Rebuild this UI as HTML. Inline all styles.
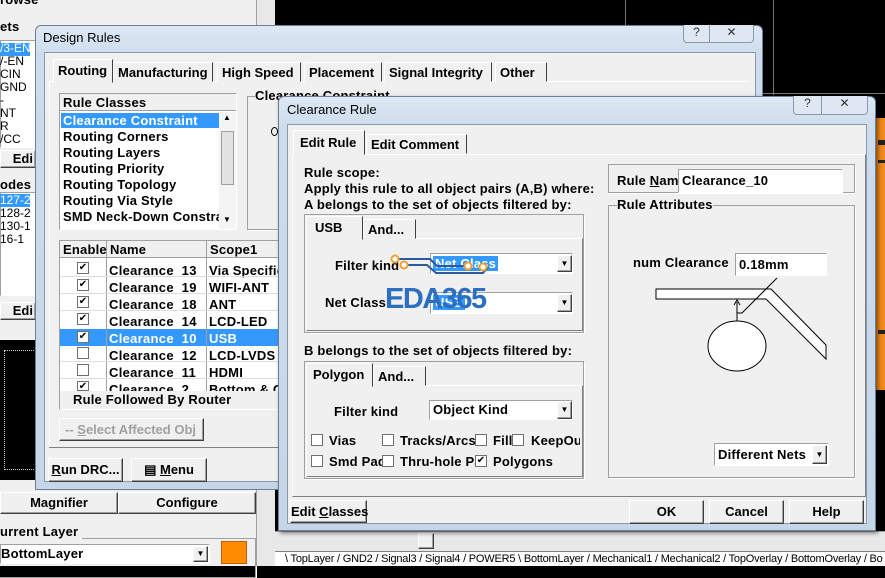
<!DOCTYPE html>
<html><head><meta charset="utf-8"><style>
*{margin:0;padding:0;box-sizing:border-box}
body{width:885px;height:566px;overflow:hidden;position:relative;background:#000;font-family:"Liberation Sans",sans-serif;font-size:13px;color:#000}
.a{position:absolute;white-space:nowrap}
.b{font-weight:bold;letter-spacing:0.2px}
.panel{background:#f0f0f0}
.sunk{border:1px solid;border-color:#a0a0a0 #fff #fff #a0a0a0;background:#fff}
.btn{background:#f0f0f0;border:1px solid;border-color:#fff #404040 #404040 #fff;box-shadow:inset -1px -1px 0 #a0a0a0;text-align:center;font-weight:bold}
.grp{border:1px solid #a0a0a0;box-shadow:1px 1px 0 #fff}
.tab{background:#f0f0f0;border:1px solid;border-color:#fff #404040 transparent #fff;font-weight:bold;padding-left:4px}
.cb{width:12px;height:12px;border:1px solid #707070;background:#fff;font-size:10px;line-height:10px;text-align:center}
.title{background:linear-gradient(#dce7f3,#c9d9ea);border:1px solid #6d7f94;border-radius:6px 6px 0 0}
</style></head><body>

<!-- left panel -->
<div class="a panel" style="left:0;top:0;width:275px;height:566px"></div>
<div class="a b" style="left:0;top:-8px;font-size:13px">rowse</div>
<div class="a b" style="left:0;top:19px">ets</div>
<div class="a sunk" style="left:0;top:40px;width:36px;height:108px"></div>
<div class="a" style="left:0;top:43px;width:30px;height:13px;background:#3399ff"></div>
<div class="a" style="left:0;top:42px;font-size:12px;line-height:13px;color:#000"><span style="color:#fff">/3-EN</span><br>/-EN<br>CIN<br>GND<br>-<br>NT<br>R<br>/CC</div>
<div class="a btn" style="left:0;top:150px;width:36px;height:18px;text-align:right;padding-right:2px">Edi</div>
<div class="a b" style="left:0;top:177px">odes</div>
<div class="a sunk" style="left:0;top:192px;width:36px;height:104px"></div>
<div class="a" style="left:0;top:194px;width:30px;height:13px;background:#3399ff"></div>
<div class="a" style="left:0;top:194px;font-size:12px;line-height:13px"><span style="color:#fff">127-2</span><br>128-2<br>130-1<br>16-1</div>
<div class="a btn" style="left:0;top:302px;width:36px;height:18px;text-align:right;padding-right:2px">Edi</div>
<div class="a" style="left:0;top:340px;width:36px;height:140px;background:#000"></div>
<div class="a" style="left:4px;top:350px;width:32px;height:120px;border:1px dotted #ccc;border-right:none"></div>
<div class="a btn" style="left:0;top:492px;width:118px;height:22px;line-height:20px">Magnifier</div>
<div class="a btn" style="left:118px;top:492px;width:138px;height:22px;line-height:20px">Configure</div>
<div class="a grp" style="left:-2px;top:538px;width:258px;height:40px"></div>
<div class="a b panel" style="left:0;top:524px;padding-right:4px">urrent Layer</div>
<div class="a sunk b" style="left:0;top:544px;width:210px;height:20px;padding-left:0;line-height:18px">BottomLayer</div>
<div class="a btn" style="left:193px;top:546px;width:15px;height:16px;font-size:8px;line-height:14px">▼</div>
<div class="a" style="left:221px;top:541px;width:26px;height:23px;background:#ff8c00;border:1px solid #c06000"></div>
<div class="a" style="left:256px;top:0;width:19px;height:566px;background:#e8e8e8;border-left:1px solid #a0a0a0"></div>

<!-- black area details -->
<div class="a" style="left:625px;top:0;width:1px;height:95px;background:#777"></div>
<div class="a" style="left:773px;top:0;width:1px;height:95px;background:#777"></div>
<div class="a" style="left:763px;top:93px;width:122px;height:1px;background:#777"></div>
<div class="a" style="left:876px;top:118px;width:9px;height:272px;background:#f08a1c"></div>
<div class="a" style="left:878px;top:140px;width:7px;height:5px;background:#222"></div>
<div class="a" style="left:878px;top:160px;width:7px;height:3px;background:#222"></div>
<div class="a" style="left:878px;top:330px;width:7px;height:4px;background:#222"></div>

<!-- bottom scroll + tabs -->
<div class="a" style="left:275px;top:531px;width:610px;height:20px;background:#e8e8e8;border-top:1px solid #a0a0a0"></div>
<div class="a btn" style="left:418px;top:533px;width:16px;height:16px"></div>
<div class="a" style="left:275px;top:551px;width:610px;height:15px;background:#fff;border-top:1px solid #808080;font-size:11px;line-height:14px;color:#000;padding-left:10px;letter-spacing:-0.2px">\ TopLayer / GND2 / Signal3 / Signal4 / POWER5 \ BottomLayer / Mechanical1 / Mechanical2 / TopOverlay / BottomOverlay / Bo</div>

<!-- Design Rules dialog -->
<div class="a title" style="left:35px;top:25px;width:728px;height:465px;background:linear-gradient(#dde8f4 0,#cddcec 30px,#c6d6e8 100%)"></div>
<div class="a" style="left:43px;top:30px;font-size:13px;color:#000">Design Rules</div>
<div class="a" style="left:683px;top:25px;width:27px;height:18px;border:1px solid #8899aa;border-top:none;border-radius:0 0 0 4px;background:#dfe8f2;text-align:center;font-size:12px;color:#333">?</div>
<div class="a" style="left:710px;top:25px;width:44px;height:18px;border:1px solid #8899aa;border-top:none;border-left:none;border-radius:0 0 4px 0;background:#dfe8f2;text-align:center;font-size:12px;color:#333">✕</div>
<div class="a panel" style="left:44px;top:52px;width:712px;height:430px;border:1px solid #8899aa"></div>
<div class="a" style="left:49px;top:81px;width:700px;height:1px;background:#fff"></div>
<div class="a" style="left:49px;top:81px;width:1px;height:366px;background:#fff"></div>
<div class="a" style="left:49px;top:447px;width:236px;height:1px;background:#808080"></div>
<div class="a tab" style="left:53px;top:59px;width:60px;height:24px;line-height:22px;border-bottom-color:#f0f0f0">Routing</div>
<div class="a tab" style="left:113px;top:62px;width:100px;height:20px;line-height:19px">Manufacturing</div>
<div class="a tab" style="left:217px;top:62px;width:84px;height:20px;line-height:19px">High Speed</div>
<div class="a tab" style="left:304px;top:62px;width:78px;height:20px;line-height:19px">Placement</div>
<div class="a tab" style="left:384px;top:62px;width:108px;height:20px;line-height:19px">Signal Integrity</div>
<div class="a tab" style="left:495px;top:62px;width:52px;height:20px;line-height:19px">Other</div>

<div class="a sunk" style="left:59px;top:93px;width:178px;height:137px"></div>
<div class="a b" style="left:60px;top:94px;width:176px;height:17px;background:#f0f0f0;border-bottom:1px solid #a0a0a0;padding-left:3px;line-height:17px">Rule Classes</div>
<div class="a" style="left:61px;top:113px;width:158px;height:15px;background:#3399ff"></div>
<div class="a b" style="left:63px;top:113px;line-height:16px;width:156px;overflow:hidden"><span style="color:#fff">Clearance Constraint</span><br>Routing Corners<br>Routing Layers<br>Routing Priority<br>Routing Topology<br>Routing Via Style<br>SMD Neck-Down Constraint</div>
<div class="a" style="left:219px;top:112px;width:17px;height:117px;background:#f4f4f4"></div>
<div class="a" style="left:221px;top:131px;width:13px;height:54px;background:#e2e2e2;border:1px solid #a0a0a0"></div>
<div class="a" style="left:223px;top:113px;font-size:8px">▲</div>
<div class="a" style="left:223px;top:215px;font-size:8px">▼</div>
<div class="a grp" style="left:247px;top:96px;width:40px;height:134px"></div>
<div class="a b panel" style="left:255px;top:88px">Clearance Constraint</div>
<div class="a" style="left:271px;top:127px;width:7px;height:9px;border:1px solid #000;border-radius:50%"></div>

<div class="a sunk" style="left:59px;top:240px;width:230px;height:170px;background:#fff"></div>
<div class="a" style="left:60px;top:241px;width:228px;height:17px;background:#f0f0f0;border-bottom:1px solid #a0a0a0"></div>
<div class="a b" style="left:63px;top:242px">Enable</div>
<div class="a b" style="left:110px;top:242px">Name</div>
<div class="a b" style="left:210px;top:242px">Scope1</div>
<div class="a" style="left:60px;top:329px;width:228px;height:17px;background:#3399ff"></div>
<div class="a" style="left:106px;top:241px;width:1px;height:150px;background:#a0a0a0"></div>
<div class="a" style="left:206px;top:241px;width:1px;height:150px;background:#a0a0a0"></div>
<div class="a b" style="left:109px;top:262px;line-height:17px;letter-spacing:0.3px">Clearance&nbsp; 13<br>Clearance&nbsp; 19<br>Clearance&nbsp; 18<br>Clearance&nbsp; 14<br><span style="color:#fff">Clearance&nbsp; 10</span><br>Clearance&nbsp; 12<br>Clearance&nbsp; 11<br>Clearance&nbsp; 2</div>
<div class="a b" style="left:209px;top:262px;line-height:17px;width:79px;overflow:hidden">Via Specific<br>WIFI-ANT<br>ANT<br>LCD-LED<br><span style="color:#fff">USB</span><br>LCD-LVDS<br>HDMI<br>Bottom &amp; C</div>
<div class="a" style="left:60px;top:276px;width:228px;height:1px;background:#ddd"></div>
<div class="a" style="left:60px;top:293px;width:228px;height:1px;background:#ddd"></div>
<div class="a" style="left:60px;top:310px;width:228px;height:1px;background:#ddd"></div>
<div class="a" style="left:60px;top:361px;width:228px;height:1px;background:#ddd"></div>
<div class="a" style="left:60px;top:378px;width:228px;height:1px;background:#ddd"></div>
<div class="a cb" style="left:77px;top:262px">✔</div>
<div class="a cb" style="left:77px;top:279px">✔</div>
<div class="a cb" style="left:77px;top:296px">✔</div>
<div class="a cb" style="left:77px;top:313px">✔</div>
<div class="a cb" style="left:77px;top:331px">✔</div>
<div class="a cb" style="left:77px;top:347px"></div>
<div class="a cb" style="left:77px;top:364px"></div>
<div class="a cb" style="left:77px;top:381px;height:10px">✔</div>
<div class="a b" style="left:60px;top:391px;width:228px;height:18px;background:#f0f0f0;padding-left:13px;line-height:17px">Rule Followed By Router</div>
<div class="a btn" style="left:59px;top:418px;width:145px;height:23px;line-height:22px;color:#a0a0a0;text-align:left;padding-left:5px">-- <u>S</u>elect Affected Obj</div>
<div class="a btn" style="left:48px;top:458px;width:75px;height:24px;line-height:22px"><u>R</u>un DRC...</div>
<div class="a btn" style="left:131px;top:458px;width:76px;height:24px;line-height:22px">▤ <u>M</u>enu</div>

<!-- Clearance Rule dialog -->
<div class="a title" style="left:278px;top:96px;width:598px;height:435px;background:linear-gradient(#dde8f4 0,#cddcec 30px,#c6d6e8 100%);box-shadow:2px 2px 4px rgba(0,0,0,.5)"></div>
<div class="a" style="left:287px;top:102px">Clearance Rule</div>
<div class="a" style="left:793px;top:96px;width:29px;height:19px;border:1px solid #8899aa;border-top:none;border-radius:0 0 0 4px;background:#dfe8f2;text-align:center;font-size:12px;color:#333">?</div>
<div class="a" style="left:822px;top:96px;width:46px;height:19px;border:1px solid #8899aa;border-top:none;border-left:none;border-radius:0 0 4px 0;background:#dfe8f2;text-align:center;font-size:12px;color:#333">✕</div>
<div class="a panel" style="left:287px;top:124px;width:580px;height:400px;border:1px solid #8899aa"></div>
<div class="a" style="left:292px;top:154px;width:574px;height:343px;border:1px solid;border-color:#fff #808080 #808080 #fff"></div>
<div class="a tab" style="left:293px;top:130px;width:72px;height:25px;line-height:24px;border-bottom-color:#f0f0f0;padding-left:6px">Edit Rule</div>
<div class="a tab" style="left:366px;top:134px;width:101px;height:20px;line-height:19px">Edit Comment</div>
<div class="a b" style="left:304px;top:165px;line-height:16px">Rule scope:<br>Apply this rule to all object pairs (A,B) where:<br>A belongs to the set of objects filtered by:</div>

<div class="a grp" style="left:304px;top:214px;width:280px;height:119px"></div>
<div class="a" style="left:306px;top:238px;width:277px;height:93px;border:1px solid;border-color:#fff #808080 #808080 #fff"></div>
<div class="a tab" style="left:306px;top:216px;width:57px;height:24px;line-height:22px;border-bottom-color:#f0f0f0;padding-left:8px">USB</div>
<div class="a tab" style="left:363px;top:219px;width:53px;height:20px;line-height:19px">And...</div>
<div class="a b" style="left:335px;top:258px">Filter kind</div>
<div class="a sunk" style="left:430px;top:253px;width:143px;height:21px"></div>
<div class="a b" style="left:433px;top:256px;background:#3399ff;color:#fff;padding:0 2px">Net Class</div>
<div class="a btn" style="left:557px;top:255px;width:15px;height:17px;font-size:8px;line-height:15px">▼</div>
<div class="a b" style="left:325px;top:295px">Net Class</div>
<div class="a sunk" style="left:430px;top:292px;width:143px;height:22px"></div>
<div class="a b" style="left:433px;top:295px;background:#3399ff;color:#fff;padding:0 2px">USB</div>
<div class="a btn" style="left:557px;top:294px;width:15px;height:18px;font-size:8px;line-height:16px">▼</div>
<svg class="a" style="left:385px;top:253px" width="110" height="30">
<path d="M10 6 H45 L52 13 H83" stroke="#2c5aa0" stroke-width="2" fill="none"/>
<path d="M19 12 H42 L51 20 H98 L103 14" stroke="#2c5aa0" stroke-width="2" fill="none"/>
<circle cx="10" cy="6" r="3.5" fill="#fff" stroke="#f0a030" stroke-width="2"/>
<circle cx="19" cy="12" r="3.5" fill="#fff" stroke="#f0a030" stroke-width="2"/>
<circle cx="83" cy="13" r="3.5" fill="#fff" stroke="#f0a030" stroke-width="2"/>
<circle cx="98" cy="14" r="3.5" fill="#fff" stroke="#f0a030" stroke-width="2"/>
</svg>
<div class="a" style="left:385px;top:282px;font-size:29px;font-weight:bold;color:#2c6fc0;letter-spacing:-1.5px;line-height:34px">EDA365</div>

<div class="a b" style="left:304px;top:343px">B belongs to the set of objects filtered by:</div>
<div class="a grp" style="left:304px;top:361px;width:280px;height:118px"></div>
<div class="a" style="left:306px;top:385px;width:277px;height:92px;border:1px solid;border-color:#fff #808080 #808080 #fff"></div>
<div class="a tab" style="left:306px;top:363px;width:67px;height:24px;line-height:22px;border-bottom-color:#f0f0f0;padding-left:6px">Polygon</div>
<div class="a tab" style="left:373px;top:366px;width:53px;height:20px;line-height:19px">And...</div>
<div class="a b" style="left:334px;top:404px">Filter kind</div>
<div class="a sunk" style="left:429px;top:400px;width:144px;height:20px"></div>
<div class="a b" style="left:433px;top:402px">Object Kind</div>
<div class="a btn" style="left:557px;top:401px;width:15px;height:18px;font-size:8px;line-height:16px">▼</div>
<div class="a cb" style="left:311px;top:434px"></div><div class="a b" style="left:329px;top:433px">Vias</div>
<div class="a cb" style="left:382px;top:434px"></div><div class="a b" style="left:400px;top:433px">Tracks/Arcs</div>
<div class="a cb" style="left:475px;top:434px"></div><div class="a b" style="left:493px;top:433px">Fill</div>
<div class="a cb" style="left:512px;top:434px"></div><div class="a b" style="left:531px;top:433px;width:49px;overflow:hidden">KeepOut</div>
<div class="a cb" style="left:311px;top:455px"></div><div class="a b" style="left:329px;top:454px;width:53px;overflow:hidden">Smd Pad</div>
<div class="a cb" style="left:382px;top:455px"></div><div class="a b" style="left:400px;top:454px;width:75px;overflow:hidden">Thru-hole Pad</div>
<div class="a cb" style="left:475px;top:455px">✔</div><div class="a b" style="left:493px;top:454px">Polygons</div>

<div class="a btn" style="left:290px;top:500px;width:77px;height:23px;line-height:21px">Edit <u>C</u>lasses</div>

<div class="a grp" style="left:608px;top:164px;width:247px;height:29px"></div>
<div class="a b panel" style="left:617px;top:173px;width:61px;overflow:hidden">Rule <u>N</u>ame</div>
<div class="a sunk b" style="left:678px;top:169px;width:165px;height:24px;padding-left:3px;line-height:21px">Clearance_10</div>
<div class="a grp" style="left:608px;top:205px;width:247px;height:273px"></div>
<div class="a b panel" style="left:617px;top:197px">Rule Attributes</div>
<div class="a b" style="left:633px;top:255px">num Clearance</div>
<div class="a sunk b" style="left:735px;top:253px;width:92px;height:23px;padding-left:3px;line-height:22px">0.18mm</div>
<svg class="a" style="left:600px;top:275px" width="240" height="110">
<path d="M56 14 H171 L226 70 V84 L166 24 H56 Z" fill="#fff" stroke="#000" stroke-width="1"/>
<path d="M137 27 V51" stroke="#000"/>
<path d="M134 30 L137 25 L140 30 M134 48 L137 53 L140 48" stroke="#000" fill="none"/>
<path d="M137 38 H142 L177 3" stroke="#000" fill="none"/>
<ellipse cx="137" cy="71" rx="29" ry="25" fill="#fff" stroke="#000"/>
</svg>
<div class="a sunk b" style="left:714px;top:443px;width:115px;height:23px;padding-left:3px;line-height:21px">Different Nets</div>
<div class="a btn" style="left:812px;top:445px;width:15px;height:19px;font-size:8px;line-height:17px">▼</div>
<div class="a btn" style="left:629px;top:500px;width:75px;height:24px;line-height:22px">OK</div>
<div class="a btn" style="left:709px;top:500px;width:75px;height:24px;line-height:22px">Cancel</div>
<div class="a btn" style="left:789px;top:500px;width:75px;height:24px;line-height:22px">Help</div>
</body></html>
